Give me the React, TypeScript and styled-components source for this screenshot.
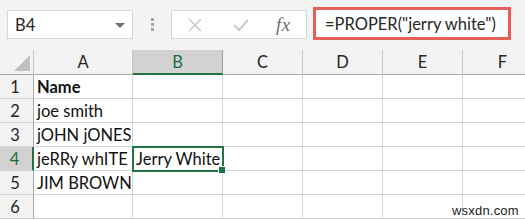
import React from 'react';
import styled, { createGlobalStyle } from 'styled-components';

const GlobalStyle = createGlobalStyle`
  html, body {
    margin: 0;
    padding: 0;
    background: #ffffff;
  }
  body {
    font-family: Lato, "Liberation Sans", Arial, sans-serif;
    width: 525px;
    height: 220px;
    overflow: hidden;
  }
`;

const columns = ['A', 'B', 'C', 'D', 'E', 'F'];
const rows: Array<Array<string>> = [
  ['Name', '', '', '', '', ''],
  ['joe smith', '', '', '', '', ''],
  ['jOHN jONES', '', '', '', '', ''],
  ['jeRRy whITE', 'Jerry White', '', '', '', ''],
  ['JIM BROWN', '', '', '', '', ''],
  ['', '', '', '', '', ''],
];

const App = () => {
  return (
    <Page>
      <GlobalStyle />
      <Toolbar>
        <NameBox>
          <span>B4</span>
          <Caret />
        </NameBox>
        <Grip>
          <i />
          <i />
          <i />
        </Grip>
        <ActionBox>
          <ActionIcon>
            <svg width="16" height="16" viewBox="0 0 16 16">
              <path d="M2 2 L14 14 M14 2 L2 14" stroke="#c8c8c8" strokeWidth="1.5" fill="none" />
            </svg>
          </ActionIcon>
          <ActionIcon>
            <svg width="18" height="16" viewBox="0 0 18 16">
              <path d="M2 8 L7 13 L16 3" stroke="#c8c8c8" strokeWidth="2" fill="none" />
            </svg>
          </ActionIcon>
          <Fx>fx</Fx>
        </ActionBox>
        <FormulaBox>=PROPER("jerry white")</FormulaBox>
      </Toolbar>

      <Sheet>
        <Corner>
          <CornerTriangle />
        </Corner>
        {columns.map((c) => (
          <ColHeader key={c} selected={c === 'B'}>
            {c}
          </ColHeader>
        ))}
        {rows.map((row, r) => (
          <React.Fragment key={r}>
            <RowHeader selected={r === 3}>{r + 1}</RowHeader>
            {row.map((value, c) => (
              <Cell key={c} bold={r === 0 && c === 0} active={r === 3 && c === 1}>
                {value}
                {r === 3 && c === 1 && <FillHandle />}
              </Cell>
            ))}
          </React.Fragment>
        ))}
      </Sheet>
      <Watermark>wsxdn.com</Watermark>
    </Page>
  );
};

const Page = styled.div`
  position: relative;
  width: 525px;
  height: 220px;
  overflow: hidden;
  background: #ffffff;
`;

const Toolbar = styled.div`
  height: 50px;
  background: #f3f3f3;
  display: flex;
  align-items: flex-start;
  padding: 10px 0 0 7px;
  box-sizing: border-box;
`;

const NameBox = styled.div`
  width: 126px;
  height: 29px;
  box-sizing: border-box;
  background: #ffffff;
  border: 1px solid #d6d6d6;
  display: flex;
  align-items: center;
  justify-content: space-between;
  padding: 0 7px 0 7px;
  font-size: 16.5px;
  color: #262626;
`;

const Caret = styled.span`
  width: 0;
  height: 0;
  border-left: 5px solid transparent;
  border-right: 5px solid transparent;
  border-top: 5px solid #6f6f6f;
  margin-top: 1px;
`;

const Grip = styled.div`
  width: 38px;
  height: 29px;
  display: flex;
  flex-direction: column;
  align-items: center;
  justify-content: center;
  gap: 2px;

  i {
    display: block;
    width: 3px;
    height: 3px;
    background: #a8a8a8;
  }
`;

const ActionBox = styled.div`
  width: 136px;
  height: 29px;
  box-sizing: border-box;
  background: #ffffff;
  border: 1px solid #d6d6d6;
  display: flex;
  align-items: center;
  padding-left: 14px;
  gap: 28px;
`;

const ActionIcon = styled.span`
  display: flex;
  align-items: center;
  justify-content: center;
  width: 18px;
`;

const Fx = styled.span`
  font-family: "Liberation Serif", "Times New Roman", serif;
  font-style: italic;
  font-size: 19px;
  color: #6d6d6d;
  margin-left: -2px;
  letter-spacing: 0.5px;
`;

const FormulaBox = styled.div`
  margin-left: 6px;
  margin-top: -3px;
  width: 198px;
  height: 33px;
  box-sizing: border-box;
  background: #ffffff;
  border: 3px solid #e8605a;
  display: flex;
  align-items: center;
  padding-left: 9px;
  font-size: 16.5px;
  color: #262626;
  white-space: nowrap;
`;

const Sheet = styled.div`
  display: grid;
  grid-template-columns: 34px 99px 90px 80px 80px 80px 80px;
  grid-template-rows: 25px repeat(6, 24px);
`;

const Corner = styled.div`
  background: #f3f3f3;
  border-right: 1px solid #c6c6c6;
  border-bottom: 1px solid #a9a9a9;
  box-sizing: border-box;
  position: relative;
`;

const CornerTriangle = styled.span`
  position: absolute;
  right: 3px;
  bottom: 3px;
  width: 0;
  height: 0;
  border-left: 16px solid transparent;
  border-bottom: 16px solid #c0c0c0;
`;

const ColHeader = styled.div<{ selected?: boolean }>`
  box-sizing: border-box;
  background: ${(p) => (p.selected ? '#d2d2d2' : '#f3f3f3')};
  border-right: 1px solid ${(p) => (p.selected ? '#9f9f9f' : '#c6c6c6')};
  border-bottom: ${(p) => (p.selected ? '2px solid #217346' : '1px solid #a9a9a9')};
  display: flex;
  align-items: center;
  justify-content: center;
  font-size: 16.5px;
  color: ${(p) => (p.selected ? '#1e6b41' : '#262626')};
  padding-top: ${(p) => (p.selected ? '1px' : '0')};
`;

const RowHeader = styled.div<{ selected?: boolean }>`
  box-sizing: border-box;
  background: ${(p) => (p.selected ? '#d2d2d2' : '#f3f3f3')};
  border-right: ${(p) => (p.selected ? '2px solid #217346' : '1px solid #a9a9a9')};
  border-bottom: 1px solid #d4d4d4;
  display: flex;
  align-items: center;
  justify-content: center;
  padding-right: 3px;
  font-size: 16.5px;
  color: ${(p) => (p.selected ? '#1e6b41' : '#262626')};
`;

const Cell = styled.div<{ bold?: boolean; active?: boolean }>`
  position: relative;
  box-sizing: border-box;
  border-right: 1px solid #d4d4d4;
  border-bottom: 1px solid #d4d4d4;
  display: flex;
  align-items: center;
  padding-left: 3px;
  font-size: 16.5px;
  font-weight: ${(p) => (p.bold ? 700 : 400)};
  color: #111111;
  white-space: nowrap;
  ${(p) =>
    p.active &&
    `
    outline: 2px solid #217346;
    outline-offset: -1px;
    z-index: 1;
  `}
`;

const FillHandle = styled.span`
  position: absolute;
  right: -4px;
  bottom: -4px;
  width: 6px;
  height: 6px;
  background: #217346;
  border: 1px solid #ffffff;
`;

const Watermark = styled.span`
  position: absolute;
  left: 452px;
  top: 203px;
  font-family: "Liberation Sans", Arial, sans-serif;
  font-size: 13px;
  color: #222222;
  letter-spacing: 0.2px;
`;

export default App;
